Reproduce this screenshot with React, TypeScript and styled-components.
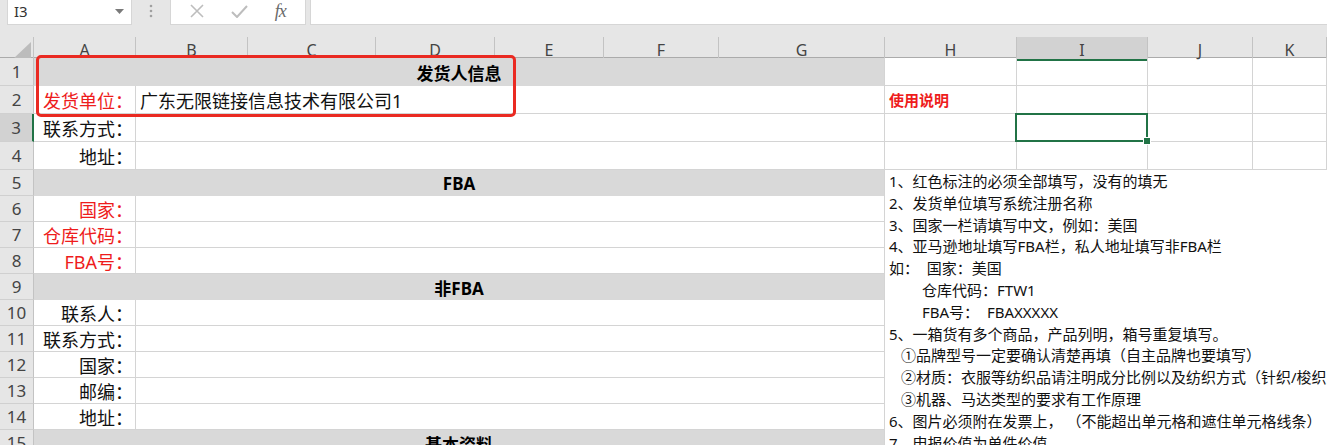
import { Fragment } from 'react'
import styled, { createGlobalStyle, css } from 'styled-components'

const GlobalStyle = createGlobalStyle`
  html, body {
    margin: 0;
    padding: 0;
    background: #ffffff;
    overflow: hidden;
  }
  body {
    width: 1327px;
    height: 445px;
    font-family: 'Noto Sans', 'Noto Sans CJK SC', sans-serif;
  }
  * {
    box-sizing: border-box;
  }
`

const GRID = '#d4d4d4'
const HEAD_BG = '#e6e6e6'
const HEAD_LINE = '#c3c3c3'
const GREEN = '#217346'
const RED = '#ee1c1c'

const LEFT_COLS = '34px 102px 112px 128px 119px 109px 115px 166px'
const RIGHT_COLS = '132px 131px 105px 1fr'
const ROW_TEMPLATE = 'repeat(4, 28px) repeat(11, 26px)'

interface RowDef {
  kind: 'band' | 'field'
  text: string
  red?: boolean
  value?: string
}

const rows: RowDef[] = [
  { kind: 'band', text: '发货人信息' },
  { kind: 'field', text: '发货单位：', red: true, value: '广东无限链接信息技术有限公司1' },
  { kind: 'field', text: '联系方式：' },
  { kind: 'field', text: '地址：' },
  { kind: 'band', text: 'FBA' },
  { kind: 'field', text: '国家：', red: true },
  { kind: 'field', text: '仓库代码：', red: true },
  { kind: 'field', text: 'FBA号：', red: true },
  { kind: 'band', text: '非FBA' },
  { kind: 'field', text: '联系人：' },
  { kind: 'field', text: '联系方式：' },
  { kind: 'field', text: '国家：' },
  { kind: 'field', text: '邮编：' },
  { kind: 'field', text: '地址：' },
  { kind: 'band', text: '基本资料' },
]

const notes: { text: string; indent?: number }[] = [
  { text: '1、红色标注的必须全部填写，没有的填无' },
  { text: '2、发货单位填写系统注册名称' },
  { text: '3、国家一栏请填写中文，例如：美国' },
  { text: '4、亚马逊地址填写FBA栏，私人地址填写非FBA栏' },
  { text: '如：  国家：美国' },
  { text: '仓库代码：FTW1', indent: 33 },
  { text: 'FBA号：  FBAXXXXX', indent: 33 },
  { text: '5、一箱货有多个商品，产品列明，箱号重复填写。' },
  { text: '①品牌型号一定要确认清楚再填（自主品牌也要填写）', indent: 12 },
  { text: '②材质：衣服等纺织品请注明成分比例以及纺织方式（针织/梭织）', indent: 12 },
  { text: '③机器、马达类型的要求有工作原理', indent: 12 },
  { text: '6、图片必须附在发票上， （不能超出单元格和遮住单元格线条）' },
  { text: '7、申报价值为单件价值' },
]

const letters = ['A', 'B', 'C', 'D', 'E', 'F', 'G', 'H', 'I', 'J', 'K']

function FormulaBar() {
  return (
    <TopBar>
      <NameBox>
        <span>I3</span>
        <svg width="9" height="6" viewBox="0 0 9 6">
          <path d="M0 0 L9 0 L4.5 5 Z" fill="#7a7a7a" />
        </svg>
      </NameBox>
      <Grip>
        <svg width="4" height="14" viewBox="0 0 4 14">
          <circle cx="2" cy="2" r="1.3" fill="#a0a0a0" />
          <circle cx="2" cy="7" r="1.3" fill="#a0a0a0" />
          <circle cx="2" cy="12" r="1.3" fill="#a0a0a0" />
        </svg>
      </Grip>
      <ActionBox>
        <svg width="14" height="14" viewBox="0 0 14 14">
          <path d="M1 1 L13 13 M13 1 L1 13" stroke="#bdbdbd" strokeWidth="1.6" fill="none" />
        </svg>
        <svg width="17" height="13" viewBox="0 0 17 13">
          <path d="M1 7 L6 12 L16 1" stroke="#bdbdbd" strokeWidth="2" fill="none" />
        </svg>
        <Fx>fx</Fx>
      </ActionBox>
      <FormulaInput />
    </TopBar>
  )
}

function ColumnHeaders() {
  return (
    <HeaderRow>
      <Corner>
        <svg width="18" height="17" viewBox="0 0 18 17">
          <path d="M0 17 L18 17 L18 0 Z" fill="#bcbcbc" />
        </svg>
      </Corner>
      {letters.map(l => (
        <ColHead key={l} active={l === 'I'}>
          {l}
        </ColHead>
      ))}
    </HeaderRow>
  )
}

function App() {
  return (
    <>
      <GlobalStyle />
      <Window>
        <FormulaBar />
        <ColumnHeaders />
        <Body>
          <LeftGrid>
            {rows.map((r, i) => (
              <Fragment key={i}>
                <RowHead active={i === 2}>{i + 1}</RowHead>
                {r.kind === 'band' ? (
                  <Band>{r.text}</Band>
                ) : (
                  <>
                    <Label red={!!r.red}>{r.text}</Label>
                    <Value>{r.value}</Value>
                  </>
                )}
              </Fragment>
            ))}
          </LeftGrid>
          <RightPane>
            <TopGrid>
              {Array.from({ length: 16 }).map((_, i) => (
                <Cell key={i} selected={i === 9}>
                  {i === 4 && <Title>使用说明</Title>}
                </Cell>
              ))}
            </TopGrid>
            <Notes>
              {notes.map((n, i) => (
                <NoteLine key={i} indent={n.indent || 0}>
                  {n.text}
                </NoteLine>
              ))}
            </Notes>
          </RightPane>
          <Marker />
        </Body>
      </Window>
    </>
  )
}

const Window = styled.div`
  width: 1327px;
  height: 445px;
  overflow: hidden;
  background: #ffffff;
  display: flex;
  flex-direction: column;
`

const TopBar = styled.div`
  height: 37px;
  flex-shrink: 0;
  background: ${HEAD_BG};
  display: flex;
  align-items: flex-start;
  padding-left: 7px;
`

const NameBox = styled.div`
  width: 125px;
  height: 25px;
  background: #ffffff;
  border: 1px solid #d6d6d6;
  border-top: none;
  display: flex;
  align-items: center;
  justify-content: space-between;
  padding: 0 7px 2px 6px;
  font-size: 15px;
  color: #333333;
  svg {
    margin-top: 2px;
  }
`

const Grip = styled.div`
  width: 38px;
  height: 25px;
  display: flex;
  align-items: center;
  justify-content: center;
  padding-bottom: 3px;
`

const ActionBox = styled.div`
  width: 136px;
  height: 25px;
  background: #ffffff;
  border: 1px solid #d6d6d6;
  border-top: none;
  display: flex;
  align-items: center;
  justify-content: space-around;
  padding: 0 6px 2px 6px;
`

const Fx = styled.span`
  font-family: 'Liberation Serif', serif;
  font-style: italic;
  font-size: 18px;
  color: #6a6a6a;
  letter-spacing: -1px;
`

const FormulaInput = styled.div`
  flex: 1;
  height: 25px;
  margin-left: 4px;
  background: #ffffff;
  border: 1px solid #d6d6d6;
  border-top: none;
  border-right: none;
`

const HeaderRow = styled.div`
  height: 21px;
  flex-shrink: 0;
  display: grid;
  grid-template-columns: ${LEFT_COLS} ${RIGHT_COLS};
  background: ${HEAD_BG};
  border-bottom: 1px solid #ababab;
`

const Corner = styled.div`
  display: flex;
  align-items: flex-end;
  justify-content: flex-end;
  padding: 0 2px 2px 0;
  border-right: 1px solid ${HEAD_LINE};
`

const ColHead = styled.div<{ active: boolean }>`
  display: flex;
  align-items: center;
  justify-content: center;
  font-size: 16px;
  color: #444444;
  padding-top: 2px;
  border-right: 1px solid ${HEAD_LINE};
  ${({ active }) =>
    active &&
    css`
      background: #d2d2d2;
      box-shadow: inset 0 -2px 0 ${GREEN};
    `}
`

const Body = styled.div`
  position: relative;
  flex: 1;
  display: flex;
  min-height: 0;
`

const LeftGrid = styled.div`
  display: grid;
  grid-template-columns: ${LEFT_COLS};
  grid-template-rows: ${ROW_TEMPLATE};
  flex-shrink: 0;
`

const RowHead = styled.div<{ active: boolean }>`
  background: ${HEAD_BG};
  border-right: 1px solid ${HEAD_LINE};
  border-bottom: 1px solid #d0d0d0;
  display: flex;
  align-items: center;
  justify-content: center;
  font-size: 17px;
  color: #444444;
  ${({ active }) =>
    active &&
    css`
      background: #d2d2d2;
      border-right: 2px solid ${GREEN};
    `}
`

const Band = styled.div`
  grid-column: span 7;
  background: #d9d9d9;
  border-right: 1px solid ${GRID};
  display: flex;
  align-items: center;
  justify-content: center;
  font-size: 17px;
  font-weight: bold;
  color: #000000;
  padding-top: 1px;
`

const Label = styled.div<{ red: boolean }>`
  border-right: 1px solid ${GRID};
  border-bottom: 1px solid ${GRID};
  display: flex;
  align-items: center;
  justify-content: flex-end;
  padding-right: 2px;
  font-size: 18px;
  white-space: nowrap;
  color: ${({ red }) => (red ? RED : '#111111')};
`

const Value = styled.div`
  grid-column: span 6;
  border-right: 1px solid ${GRID};
  border-bottom: 1px solid ${GRID};
  display: flex;
  align-items: center;
  padding-left: 4px;
  font-size: 18px;
  color: #111111;
  white-space: nowrap;
`

const RightPane = styled.div`
  flex: 1;
  display: flex;
  flex-direction: column;
  min-width: 0;
`

const TopGrid = styled.div`
  display: grid;
  grid-template-columns: ${RIGHT_COLS};
  grid-template-rows: repeat(4, 28px);
`

const Cell = styled.div<{ selected: boolean }>`
  position: relative;
  border-right: 1px solid ${GRID};
  border-bottom: 1px solid ${GRID};
  display: flex;
  align-items: center;
  padding-left: 4px;
  ${({ selected }) =>
    selected &&
    css`
      &::after {
        content: '';
        position: absolute;
        left: -2px;
        top: -1px;
        right: -1px;
        bottom: -1px;
        border: 2px solid ${GREEN};
      }
      &::before {
        content: '';
        position: absolute;
        right: -4px;
        bottom: -4px;
        width: 6px;
        height: 6px;
        background: ${GREEN};
        border: 1px solid #ffffff;
        z-index: 1;
      }
    `}
`

const Title = styled.span`
  font-size: 15px;
  font-weight: bold;
  color: ${RED};
`

const Notes = styled.div`
  flex: 1;
  overflow: hidden;
  padding: 1px 0 0 4px;
`

const NoteLine = styled.div<{ indent: number }>`
  font-size: 15px;
  line-height: 21.8px;
  height: 21.8px;
  color: #111111;
  white-space: pre;
  padding-left: ${({ indent }) => indent}px;
`

const Marker = styled.div`
  position: absolute;
  left: 36px;
  top: -3px;
  width: 480px;
  height: 62px;
  border: 3px solid #ea2a22;
  border-radius: 5px;
  pointer-events: none;
`

export default App
